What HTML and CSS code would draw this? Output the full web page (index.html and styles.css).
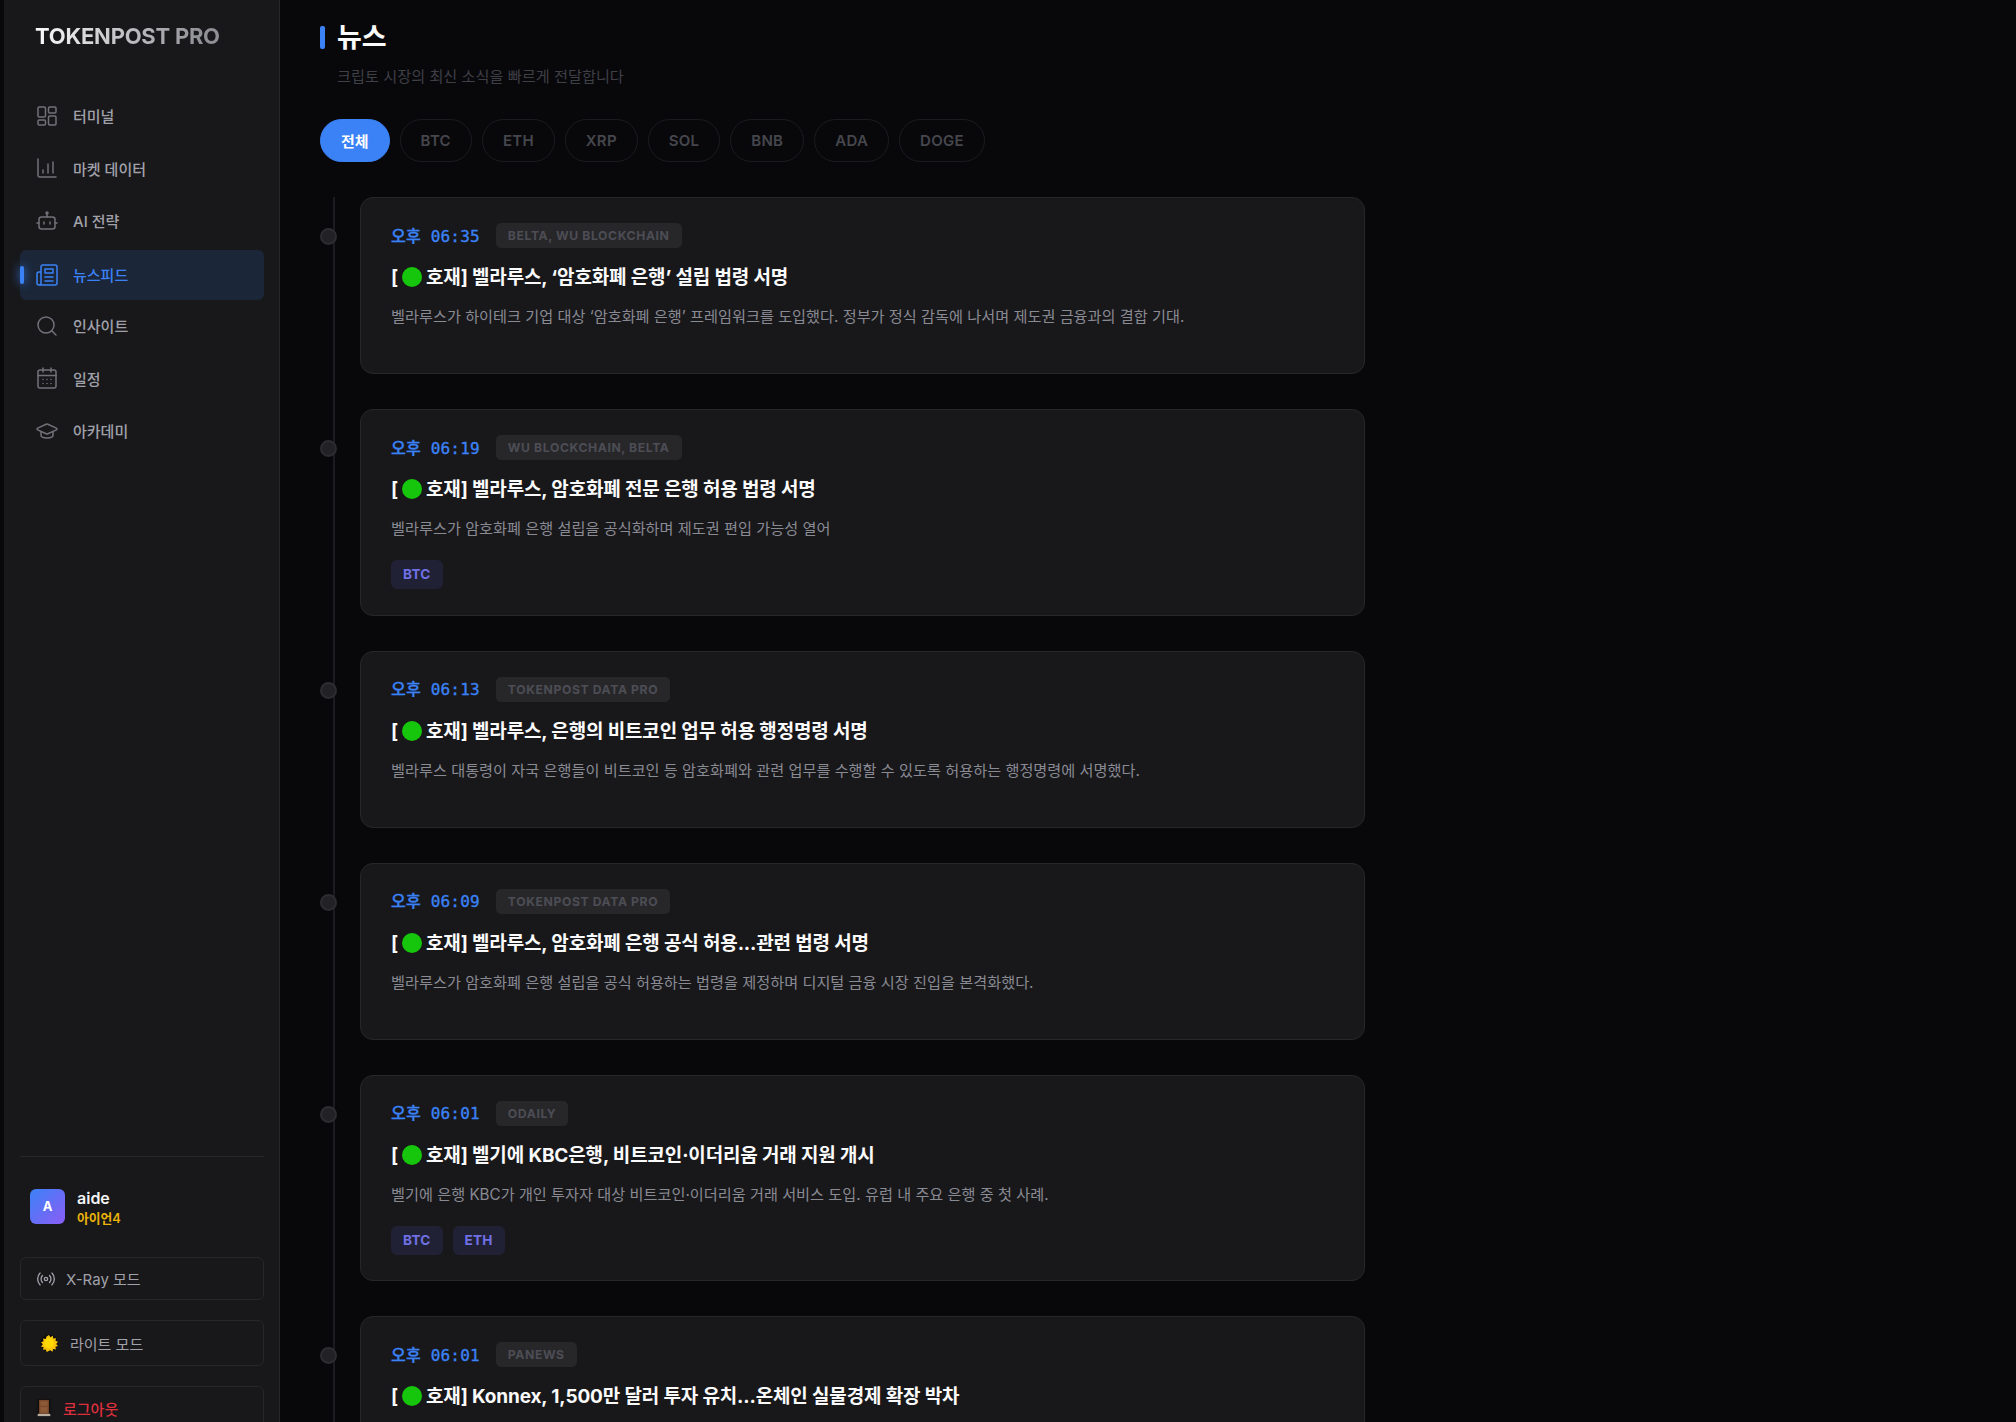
FILE: index.html
```html
<!DOCTYPE html>
<html lang="ko">
<head>
  <meta charset="UTF-8">
  <meta name="viewport" content="width=device-width, initial-scale=1.0">
  <title>TOKENPOST PRO - 뉴스</title>
  <link rel="stylesheet" href="styles.css">
</head>
<body>
  <div class="app">
    <aside class="sidebar">
      <div class="logo">TOKENPOST PRO</div>
      <nav class="nav">
        <a class="nav-item">
          <svg class="nav-icon" viewBox="0 0 24 24"><rect x="3" y="3" width="7.5" height="10" rx="1.2"/><rect x="13.5" y="3" width="7.5" height="6" rx="1.2"/><rect x="3" y="16" width="7.5" height="5" rx="1.2"/><rect x="13.5" y="12" width="7.5" height="9" rx="1.2"/></svg>
          <span>터미널</span>
        </a>
        <a class="nav-item">
          <svg class="nav-icon" viewBox="0 0 24 24"><path d="M3 3v16a2 2 0 0 0 2 2h16"/><path d="M8 17v-3"/><path d="M13 17V8"/><path d="M18 17V6"/></svg>
          <span>마켓 데이터</span>
        </a>
        <a class="nav-item">
          <svg class="nav-icon" viewBox="0 0 24 24"><path d="M12 8V5"/><circle cx="12" cy="4" r="1"/><rect x="4" y="8" width="16" height="12" rx="2.5"/><path d="M2 14h2"/><path d="M20 14h2"/><path d="M9 13v2"/><path d="M15 13v2"/></svg>
          <span>AI 전략</span>
        </a>
        <a class="nav-item active">
          <svg class="nav-icon" viewBox="0 0 24 24"><path d="M4 22h16a2 2 0 0 0 2-2V4a2 2 0 0 0-2-2H8a2 2 0 0 0-2 2v16a2 2 0 0 1-4 0v-9a2 2 0 0 1 2-2h2"/><path d="M10 6h8v4h-8z"/><path d="M10 14h8"/><path d="M10 18h8"/></svg>
          <span>뉴스피드</span>
        </a>
        <a class="nav-item">
          <svg class="nav-icon" viewBox="0 0 24 24"><circle cx="11" cy="11" r="8"/><path d="m21 21-4.3-4.3"/></svg>
          <span>인사이트</span>
        </a>
        <a class="nav-item">
          <svg class="nav-icon" viewBox="0 0 24 24"><rect x="3" y="4" width="18" height="18" rx="2"/><path d="M3 9.5h18"/><path d="M8 2v4"/><path d="M16 2v4"/><path d="M8 13.5h.01M12 13.5h.01M16 13.5h.01M8 17.5h.01M12 17.5h.01M16 17.5h.01"/></svg>
          <span>일정</span>
        </a>
        <a class="nav-item">
          <svg class="nav-icon" viewBox="0 0 24 24"><path d="M21.4 10.9a1 1 0 0 0 0-1.8L12.8 5.2a2 2 0 0 0-1.6 0L2.6 9.1a1 1 0 0 0 0 1.8l8.6 3.9a2 2 0 0 0 1.6 0z"/><path d="M6 12.5V16c0 1.7 2.7 3 6 3s6-1.3 6-3v-3.5"/></svg>
          <span>아카데미</span>
        </a>
      </nav>

      <div class="sidebar-footer">
        <div class="user">
          <div class="avatar">A</div>
          <div class="user-info">
            <div class="user-name">aide</div>
            <div class="user-tier">아이언4</div>
          </div>
        </div>
        <button class="side-btn xray">
          <svg class="btn-icon" viewBox="0 0 24 24"><path d="M4.9 19.1C1 15.2 1 8.8 4.9 4.9"/><path d="M7.8 16.2c-2.3-2.3-2.3-6.1 0-8.5"/><circle cx="12" cy="12" r="2"/><path d="M16.2 7.8c2.3 2.3 2.3 6.1 0 8.5"/><path d="M19.1 4.9C23 8.8 23 15.1 19.1 19"/></svg>
          <span>X-Ray 모드</span>
        </button>
        <button class="side-btn light">
          <svg class="emoji-icon" viewBox="0 0 20 20"><circle cx="10" cy="10" r="9.5" fill="#0a0a0a"/><path fill="#f8c40a" d="M10 1l1.6 2.6L14.2 2l.6 3 3-.4-.6 3 2.8 1-2 2.4 2 2.2-2.8 1 .4 3-3-.5-.6 2.9-2.6-1.6L7.4 20l-1-2.8-3 .4.6-3-2.9-.8 2-2.4-2-2.3 2.8-1-.5-3 3 .5.8-2.8z"/><circle cx="10" cy="10" r="5.5" fill="#ffd900"/></svg>
          <span>라이트 모드</span>
        </button>
        <button class="side-btn logout">
          <svg class="emoji-icon door" viewBox="0 0 20 20"><rect x="3" y="0" width="14" height="18" fill="#0d0d0d"/><rect x="4.5" y="1" width="11" height="15.5" fill="#7a4a2c"/><rect x="6" y="2.5" width="8" height="5" fill="#8d5a37"/><rect x="6" y="9" width="8" height="6" fill="#8d5a37"/><rect x="3" y="16.5" width="14" height="2.5" fill="#b9ad9d"/></svg>
          <span>로그아웃</span>
        </button>
      </div>
    </aside>

    <main class="main">
      <header class="page-head">
        <h1>뉴스</h1>
        <p>크립토 시장의 최신 소식을 빠르게 전달합니다</p>
      </header>

      <div class="filters">
        <button class="pill active">전체</button>
        <button class="pill">BTC</button>
        <button class="pill">ETH</button>
        <button class="pill">XRP</button>
        <button class="pill">SOL</button>
        <button class="pill">BNB</button>
        <button class="pill">ADA</button>
        <button class="pill">DOGE</button>
      </div>

      <div class="timeline">
        <article class="news-row">
          <span class="dot"></span>
          <div class="card">
            <div class="meta"><span class="time">오후 06:35</span><span class="source">BELTA, WU BLOCKCHAIN</span></div>
            <h3>[<i class="green"></i>호재] 벨라루스, ‘암호화폐 은행’ 설립 법령 서명</h3>
            <p>벨라루스가 하이테크 기업 대상 ‘암호화폐 은행’ 프레임워크를 도입했다. 정부가 정식 감독에 나서며 제도권 금융과의 결합 기대.</p>
          </div>
        </article>
        <article class="news-row">
          <span class="dot"></span>
          <div class="card">
            <div class="meta"><span class="time">오후 06:19</span><span class="source">WU BLOCKCHAIN, BELTA</span></div>
            <h3>[<i class="green"></i>호재] 벨라루스, 암호화폐 전문 은행 허용 법령 서명</h3>
            <p>벨라루스가 암호화폐 은행 설립을 공식화하며 제도권 편입 가능성 열어</p>
            <div class="tags"><span class="tag">BTC</span></div>
          </div>
        </article>
        <article class="news-row">
          <span class="dot"></span>
          <div class="card">
            <div class="meta"><span class="time">오후 06:13</span><span class="source">TOKENPOST DATA PRO</span></div>
            <h3>[<i class="green"></i>호재] 벨라루스, 은행의 비트코인 업무 허용 행정명령 서명</h3>
            <p>벨라루스 대통령이 자국 은행들이 비트코인 등 암호화폐와 관련 업무를 수행할 수 있도록 허용하는 행정명령에 서명했다.</p>
          </div>
        </article>
        <article class="news-row">
          <span class="dot"></span>
          <div class="card">
            <div class="meta"><span class="time">오후 06:09</span><span class="source">TOKENPOST DATA PRO</span></div>
            <h3>[<i class="green"></i>호재] 벨라루스, 암호화폐 은행 공식 허용...관련 법령 서명</h3>
            <p>벨라루스가 암호화폐 은행 설립을 공식 허용하는 법령을 제정하며 디지털 금융 시장 진입을 본격화했다.</p>
          </div>
        </article>
        <article class="news-row">
          <span class="dot"></span>
          <div class="card">
            <div class="meta"><span class="time">오후 06:01</span><span class="source">ODAILY</span></div>
            <h3>[<i class="green"></i>호재] 벨기에 KBC은행, 비트코인·이더리움 거래 지원 개시</h3>
            <p>벨기에 은행 KBC가 개인 투자자 대상 비트코인·이더리움 거래 서비스 도입. 유럽 내 주요 은행 중 첫 사례.</p>
            <div class="tags"><span class="tag">BTC</span><span class="tag">ETH</span></div>
          </div>
        </article>
        <article class="news-row">
          <span class="dot"></span>
          <div class="card">
            <div class="meta"><span class="time">오후 06:01</span><span class="source">PANEWS</span></div>
            <h3>[<i class="green"></i>호재] Konnex, 1,500만 달러 투자 유치...온체인 실물경제 확장 박차</h3>
          </div>
        </article>
      </div>
    </main>
  </div>
</body>
</html>
```

FILE: styles.css
```css
* {
  box-sizing: border-box;
}
html, body {
  margin: 0;
  height: 100%;
  overflow: hidden;
}
body {
  background-color: #08080b;
  color: #e4e4e7;
  font-family: Inter, "Noto Sans CJK KR", sans-serif;
}
.app {
  display: flex;
  align-items: flex-start;
  height: 1422px;
  overflow: hidden;
  background-color: #08080b;
}

/* sidebar */
.sidebar {
  flex: none;
  width: 276px;
  height: 1470px;
  margin-left: 4px;
  padding: 0 15px 0 16px;
  display: flex;
  flex-direction: column;
  background-color: #18181b;
  border-right: 1px solid #27272a;
}
.logo {
  margin: 22px 0 0 15px;
  font-size: 22px;
  line-height: 28px;
  font-weight: 700;
  color: transparent;
  background: linear-gradient(90deg, #fafafa, #8f8f96 90%);
  -webkit-background-clip: text;
  background-clip: text;
  width: 186px;
  white-space: nowrap;
  letter-spacing: -0.25px;
}
.nav {
  margin-top: 40.5px;
  display: flex;
  flex-direction: column;
  gap: 2.5px;
}
.nav-item {
  position: relative;
  display: flex;
  align-items: center;
  gap: 14px;
  height: 50px;
  padding-left: 15px;
  border-radius: 6px;
  color: #a1a1aa;
  font-size: 15px;
  font-weight: 500;
}
.nav-icon {
  width: 24px;
  height: 24px;
  fill: none;
  stroke: #71717a;
  stroke-width: 1.5;
  stroke-linecap: round;
  stroke-linejoin: round;
}
.nav-item.active {
  margin: 1.5px 0 -1.5px;
  background-color: #1b2638;
  color: #3b82f6;
}
.nav-item.active .nav-icon {
  stroke: #3b82f6;
}
.nav-item.active::before {
  content: "";
  position: absolute;
  left: 0;
  top: 16px;
  width: 4px;
  height: 18px;
  border-radius: 2px;
  background-color: #3b82f6;
  box-shadow: 0 0 10px #3b82f6;
}
.sidebar-footer {
  margin-top: auto;
  border-top: 1px solid #27272a;
  padding-top: 28px;
  padding-bottom: 20px;
}
.user {
  display: flex;
  align-items: center;
  gap: 12px;
  padding-left: 10px;
  margin-bottom: 29.5px;
}
.user-info {
  padding-top: 3px;
}
.avatar {
  width: 35px;
  height: 35px;
  border-radius: 6px;
  display: flex;
  align-items: center;
  justify-content: center;
  background: linear-gradient(135deg, #3b82f6, #8b5cf6);
  color: #fff;
  font-size: 13px;
  font-weight: 700;
}
.user-name {
  font-size: 16px;
  line-height: 20px;
  font-weight: 600;
  color: #f4f4f5;
}
.user-tier {
  margin-top: 2px;
  font-size: 12.8px;
  line-height: 18px;
  font-weight: 600;
  color: #eab308;
}
.side-btn {
  display: flex;
  align-items: center;
  width: 100%;
  height: 44px;
  margin-bottom: 20px;
  padding: 0;
  background: none;
  border: 1px solid #27272a;
  border-radius: 6px;
  color: #a1a1aa;
  font-family: inherit;
  font-size: 15px;
  text-align: left;
}
.btn-icon {
  width: 20px;
  height: 20px;
  margin-left: 15px;
  margin-right: 10px;
  fill: none;
  stroke: #a1a1aa;
  stroke-width: 1.6;
  stroke-linecap: round;
  stroke-linejoin: round;
}
.emoji-icon {
  width: 18px;
  height: 18px;
}
.side-btn.xray {
  height: 43px;
}
.side-btn.light {
  height: 46px;
}
.side-btn.light .emoji-icon {
  margin-left: 19px;
  margin-right: 12px;
}
.side-btn.logout {
  color: #dc2f3c;
  font-weight: 500;
}
.side-btn.logout .emoji-icon {
  margin-left: 14px;
  margin-right: 10px;
}

/* main */
.main {
  flex: 1;
  min-width: 0;
  padding: 0 0 0 40px;
}
.page-head {
  padding-top: 19px;
}
.page-head h1 {
  margin: 0;
  padding-left: 17px;
  position: relative;
  font-size: 27px;
  line-height: 38px;
  font-weight: 700;
  color: #fafafa;
}
.page-head h1::before {
  content: "";
  position: absolute;
  left: 0;
  top: 7px;
  width: 5px;
  height: 23px;
  border-radius: 2px;
  background-color: #3b82f6;
}
.page-head p {
  margin: 10px 0 0 17px;
  font-size: 15.2px;
  line-height: 20px;
  color: #3f3f46;
}
.filters {
  display: flex;
  gap: 10px;
  margin-top: 32px;
}
.pill {
  height: 43px;
  padding: 0 20px;
  border: 1px solid #1c1c20;
  border-radius: 22px;
  background-color: transparent;
  color: #46464d;
  font-family: inherit;
  font-size: 15px;
  font-weight: 600;
  letter-spacing: 0.25px;
}
.pill.active {
  background-color: #3b82f6;
  border-color: #3b82f6;
  color: #fff;
  font-weight: 700;
  letter-spacing: 0;
}
.timeline {
  position: relative;
  margin-top: 35px;
  padding-left: 40px;
  display: flex;
  flex-direction: column;
  gap: 35px;
}
.timeline::before {
  content: "";
  position: absolute;
  left: 13px;
  top: 0;
  bottom: 0;
  width: 2px;
  background-color: #1c1c20;
}
.news-row {
  position: relative;
  width: 1005px;
}
.dot {
  position: absolute;
  left: -40px;
  top: 31px;
  width: 17px;
  height: 17px;
  border-radius: 50%;
  background-color: #222226;
  border: 2px solid #2d2d31;
}
.card {
  min-height: 177px;
  padding: 25px 30px 25.5px;
  background-color: #18181b;
  border: 1px solid #27272a;
  border-radius: 13px;
}
.meta {
  display: flex;
  align-items: center;
  gap: 16px;
  height: 25px;
}
.time {
  padding-bottom: 2px;
  font-family: "DejaVu Sans Mono", "Noto Sans CJK KR", monospace;
  font-size: 16px;
  font-weight: 500;
  letter-spacing: 0.2px;
  color: #3b82f6;
  -webkit-text-stroke: 0.35px #3b82f6;
}
.source {
  padding: 0 12px;
  height: 25px;
  line-height: 25px;
  border-radius: 5px;
  background-color: #27272a;
  color: #4d4d55;
  font-size: 12.2px;
  font-weight: 700;
  letter-spacing: 0.6px;
}
.card h3 {
  margin: 15px 0 0;
  font-size: 19px;
  line-height: 30px;
  font-weight: 700;
  letter-spacing: -0.15px;
  color: #fafafa;
}
.green {
  display: inline-block;
  width: 20px;
  height: 20px;
  margin: 0 4px 0 4px;
  vertical-align: -3px;
  border-radius: 50%;
  background-color: #16c60c;
}
.card p {
  margin: 12px 0 0;
  font-size: 15.2px;
  line-height: 24px;
  color: #8a8a93;
}
.tags {
  display: flex;
  gap: 10px;
  margin-top: 19px;
}
.tag {
  padding: 0 12px;
  height: 29px;
  line-height: 29px;
  border-radius: 6px;
  background-color: #212136;
  color: #6f70e4;
  font-size: 13.6px;
  font-weight: 700;
  letter-spacing: 0.2px;
}
```
